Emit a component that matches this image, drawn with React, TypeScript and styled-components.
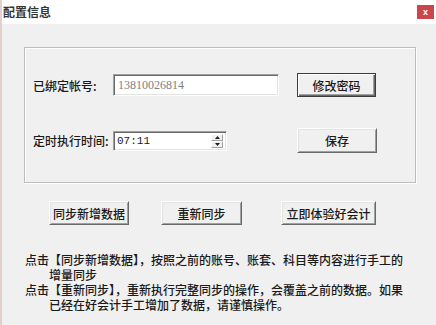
import React from "react";
import styled, { createGlobalStyle } from "styled-components";

const Global = createGlobalStyle`
  html, body { margin: 0; padding: 0; background: #f0f0f0; }
  body { width: 436px; height: 325px; overflow: hidden; }
`;

const FONT = `"Noto Sans CJK SC", "Liberation Sans", sans-serif`;

const Window = styled.div`
  width: 436px;
  height: 325px;
  box-sizing: border-box;
  background: #f0f0f0;
  border-left: 2px solid #e4cfcf;
  display: flex;
  flex-direction: column;
  font-family: ${FONT};
  font-size: 12px;
  font-weight: 500;
  color: #1a1a1a;
`;

const TitleBar = styled.div`
  height: 24px;
  background: #ffffff;
  display: flex;
  align-items: flex-start;
  justify-content: space-between;
  padding-left: 1px;
`;

const Title = styled.div`
  font-weight: 700;
  font-size: 12px;
  line-height: 24px;
  color: #363636;
`;

const Close = styled.div`
  margin-top: 5px;
  margin-right: 2px;
  width: 17px;
  height: 14px;
  background: #c8464c;
  color: #fff;
  font-family: "Liberation Sans", sans-serif;
  font-size: 9px;
  font-weight: 700;
  line-height: 14px;
  text-align: center;
`;

const Content = styled.div`
  padding-left: 22px;
  display: flex;
  flex-direction: column;
`;

const GroupBox = styled.div`
  margin-top: 23px;
  width: 392px;
  height: 136px;
  box-sizing: border-box;
  border: 1px solid #bdbdbd;
  box-shadow: inset 1px 1px 0 #ffffff, 1px 1px 0 #ffffff;
  padding: 25px 0 0 8px;
  display: grid;
  grid-template-columns: 80px 184px 80px;
  grid-template-rows: 24px 25px;
  row-gap: 31px;
  align-items: center;
`;

const Label = styled.label`
  white-space: nowrap;
  color: #1a1a1a;
`;

const sunken = `
  box-sizing: border-box;
  background: #ffffff;
  border: 1px solid;
  border-color: #a0a0a0 #ffffff #ffffff #a0a0a0;
  box-shadow: inset 1px 1px 0 #696969, inset -1px -1px 0 #e3e3e3;
`;

const TextInput = styled.input<{ $w: number; $h: number; $muted?: boolean }>`
  ${sunken}
  width: ${(p) => p.$w}px;
  height: ${(p) => p.$h}px;
  padding: 0 0 0 4px;
  margin: 0;
  outline: none;
  font-family: "Liberation Serif", serif;
  font-size: 12px;
  color: ${(p) => (p.$muted ? "#808080" : "#1a1a1a")};
`;

const SpinField = styled.div`
  ${sunken}
  width: 114px;
  height: 20px;
  display: flex;
  align-items: stretch;
  padding: 2px 3px 2px 0;
`;

const SpinText = styled.input`
  flex: 1;
  min-width: 0;
  border: none;
  background: transparent;
  outline: none;
  padding: 0 0 0 3px;
  margin: 0;
  font-family: "Liberation Mono", monospace;
  font-size: 11px;
  color: #1a1a1a;
`;

const Spinner = styled.div`
  width: 12px;
  display: flex;
  flex-direction: column;
`;

const SpinButton = styled.div`
  flex: 1;
  box-sizing: border-box;
  background: #f0f0f0;
  border: 1px solid;
  border-color: #ffffff #a0a0a0 #a0a0a0 #ffffff;
  display: flex;
  align-items: center;
  justify-content: center;
`;

const Button = styled.button<{ $w: number; $h?: number; $default?: boolean; $ml?: number }>`
  box-sizing: border-box;
  width: ${(p) => p.$w}px;
  height: ${(p) => p.$h ?? 24}px;
  margin: 0 0 0 ${(p) => p.$ml ?? 0}px;
  padding: 0;
  background: #f0f0f0;
  font-family: ${FONT};
  font-size: 12px;
  font-weight: 500;
  color: #1a1a1a;
  border: 1px solid;
  border-color: ${(p) => (p.$default ? "#3c3c3c" : "#ffffff #696969 #696969 #ffffff")};
  box-shadow: ${(p) =>
    p.$default
      ? "inset 1px 1px 0 #ffffff, inset -1px -1px 0 #696969, inset -2px -2px 0 #a0a0a0"
      : "inset 1px 1px 0 #e3e3e3, inset -1px -1px 0 #a0a0a0"};
  cursor: default;
`;

const ActionRow = styled.div`
  margin-top: 18px;
  padding-left: 25px;
  display: flex;
  gap: 32px;
`;

const Notes = styled.div`
  margin-top: 27px;
  padding-left: 1px;
  line-height: 15px;
  display: flex;
  flex-direction: column;
`;

const NoteLine = styled.div<{ $indent?: boolean }>`
  white-space: nowrap;
  padding-left: ${(p) => (p.$indent ? 24 : 0)}px;
`;

const Arrow = ({ up }: { up?: boolean }) => (
  <svg width="5" height="3" viewBox="0 0 5 3">
    <polygon points={up ? "2.5,0 5,3 0,3" : "0,0 5,0 2.5,3"} fill="#1a1a1a" />
  </svg>
);

export default function App() {
  return (
    <>
      <Global />
      <Window>
        <TitleBar>
          <Title>配置信息</Title>
          <Close>x</Close>
        </TitleBar>
        <Content>
          <GroupBox>
            <Label>已绑定帐号:</Label>
            <TextInput $w={166} $h={22} $muted readOnly value="13810026814" />
            <Button $w={79} $default>修改密码</Button>
            <Label>定时执行时间:</Label>
            <SpinField>
              <SpinText readOnly value="07:11" />
              <Spinner>
                <SpinButton><Arrow up /></SpinButton>
                <SpinButton><Arrow /></SpinButton>
              </Spinner>
            </SpinField>
            <Button $w={80} $h={25}>保存</Button>
          </GroupBox>
          <ActionRow>
            <Button $w={80}>同步新增数据</Button>
            <Button $w={81}>重新同步</Button>
            <Button $w={95} $ml={7}>立即体验好会计</Button>
          </ActionRow>
          <Notes>
            <NoteLine>点击【同步新增数据】，按照之前的账号、账套、科目等内容进行手工的</NoteLine>
            <NoteLine $indent>增量同步</NoteLine>
            <NoteLine>点击【重新同步】，重新执行完整同步的操作，会覆盖之前的数据。如果</NoteLine>
            <NoteLine $indent>已经在好会计手工增加了数据，请谨慎操作。</NoteLine>
          </Notes>
        </Content>
      </Window>
    </>
  );
}
